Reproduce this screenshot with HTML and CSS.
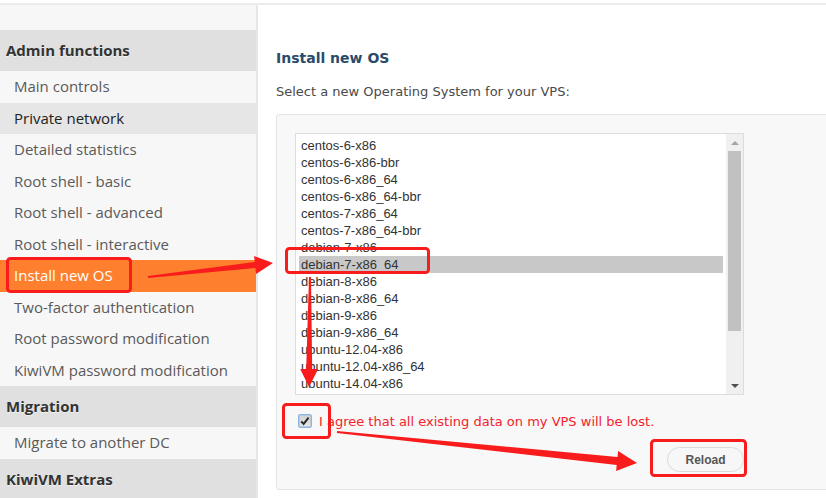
FILE: index.html
```html
<!DOCTYPE html>
<html lang="en">
<head>
<meta charset="utf-8">
<title>Install new OS</title>
<link rel="stylesheet" href="styles.css">
</head>
<body>
<div class="topline"></div>
<div class="layout">
  <aside class="sidebar">
    <div class="sb-head">Admin functions</div>
    <a class="sb-item">Main controls</a>
    <a class="sb-item sb-hover">Private network</a>
    <a class="sb-item">Detailed statistics</a>
    <a class="sb-item">Root shell - basic</a>
    <a class="sb-item">Root shell - advanced</a>
    <a class="sb-item">Root shell - interactive</a>
    <a class="sb-item sb-active">Install new OS</a>
    <a class="sb-item">Two-factor authentication</a>
    <a class="sb-item">Root password modification</a>
    <a class="sb-item">KiwiVM password modification</a>
    <div class="sb-head">Migration</div>
    <a class="sb-item">Migrate to another DC</a>
    <div class="sb-head">KiwiVM Extras</div>
  </aside>
  <main class="main">
    <h2 class="title">Install new OS</h2>
    <p class="desc">Select a new Operating System for your VPS:</p>
    <div class="panel">
      <div class="panel-body">
        <div class="listbox">
          <div class="options">
            <div class="opt">centos-6-x86</div>
            <div class="opt">centos-6-x86-bbr</div>
            <div class="opt">centos-6-x86_64</div>
            <div class="opt">centos-6-x86_64-bbr</div>
            <div class="opt">centos-7-x86_64</div>
            <div class="opt">centos-7-x86_64-bbr</div>
            <div class="opt">debian-7-x86</div>
            <div class="opt opt-sel">debian-7-x86_64</div>
            <div class="opt">debian-8-x86</div>
            <div class="opt">debian-8-x86_64</div>
            <div class="opt">debian-9-x86</div>
            <div class="opt">debian-9-x86_64</div>
            <div class="opt">ubuntu-12.04-x86</div>
            <div class="opt">ubuntu-12.04-x86_64</div>
            <div class="opt">ubuntu-14.04-x86</div>
            <div class="opt">ubuntu-14.04-x86_64</div>
          </div>
          <div class="scrollbar">
            <span class="sb-btn"><span class="tri-up"></span></span>
            <span class="thumb"></span>
            <span class="sb-space"></span>
            <span class="sb-btn"><span class="tri-down"></span></span>
          </div>
        </div>
        <label class="agree">
          <span class="check"><svg viewBox="0 0 12 12" width="12" height="12"><path d="M2.2 6.4 L4.6 8.9 L9.6 2.6" fill="none" stroke="#2b2b2b" stroke-width="2"/></svg></span>
          <span class="agree-text">I agree that all existing data on my VPS will be lost.</span>
        </label>
        <div class="actions">
          <button class="btn" type="button">Reload</button>
        </div>
      </div>
    </div>
  </main>
</div>
<svg class="annot" width="826" height="498" viewBox="0 0 826 498">
  <g fill="none" stroke="#f81c1c" stroke-width="3">
    <rect x="7.5" y="258.5" width="123" height="33" rx="3"/>
    <rect x="286.5" y="248.5" width="142" height="24" rx="3"/>
    <rect x="283.5" y="404.5" width="46" height="33" rx="3"/>
    <rect x="651.5" y="440.5" width="94" height="35" rx="3"/>
  </g>
  <g fill="#f81c1c">
    <polygon points="148.1,278 255.4,268 256.1,273.9 273,263 254.1,256.1 254.8,262 147.9,276"/>
    <polygon points="311,277 312.2,369 318.2,369 309,387 300.2,369 306.2,369 309,277"/>
    <polygon points="336.9,433 616.7,464.9 616.1,470.9 637,463 618.1,451 617.5,457 337.1,431"/>
  </g>
</svg>
</body>
</html>
```
FILE: styles.css
```css
html, body {
  margin: 0;
  padding: 0;
}
body {
  width: 826px;
  height: 498px;
  overflow: hidden;
  background: #fff;
  position: relative;
}
.topline {
  height: 3px;
  background: #fff;
  border-bottom: 2px solid #ececec;
}
.layout {
  display: flex;
  height: 493px;
}
.sidebar {
  width: 256px;
  flex: none;
  background: #f7f7f7;
  border-right: 2px solid #e6e6e6;
  padding-top: 25px;
  font-family: "Open Sans", "Noto Sans", sans-serif;
}
.sb-head {
  height: 41px;
  line-height: 41px;
  padding-left: 6px;
  background: #e0e0e0;
  font-weight: 700;
  font-size: 15px;
  color: #333;
  text-shadow: 0 1px 0 rgba(255, 255, 255, 0.6);
}
.sb-item {
  display: block;
  height: 31.5px;
  line-height: 31.5px;
  padding-left: 14px;
  font-size: 15px;
  color: #5a5a5a;
  white-space: nowrap;
}
.sb-hover {
  background: #e6e6e6;
  color: #222;
}
.sb-active {
  background: #fe7f2e;
  color: #fff;
}
.main {
  flex: 1;
  min-width: 0;
  padding: 44px 0 0 18px;
  font-family: "DejaVu Sans", Verdana, sans-serif;
}
.title {
  margin: 0;
  font-size: 14px;
  line-height: 18px;
  font-weight: 700;
  color: #294a69;
}
.desc {
  margin: 17px 0 0;
  font-size: 13px;
  line-height: 16px;
  color: #4a4a4a;
}
.panel {
  margin-top: 14px;
  width: 640px;
  border: 1px solid #e3e3e3;
  border-radius: 3px;
  background: #f8f8f8;
  padding: 18px 0 17px 18px;
}
.panel-body {
  width: 449px;
}
.listbox {
  display: flex;
  height: 262px;
  box-sizing: border-box;
  border: 1px solid #dcdcdc;
  background: #fff;
}
.options {
  flex: 1;
  min-width: 0;
  padding: 3px 3px 0 3px;
  overflow: hidden;
  font-family: "Liberation Sans", Arial, sans-serif;
  font-size: 13px;
  color: #333;
}
.opt {
  height: 17px;
  line-height: 17px;
  padding-left: 2px;
  white-space: nowrap;
}
.opt-sel {
  background: #c8c8c8;
}
.scrollbar {
  width: 17px;
  flex: none;
  background: #f0f0f0;
  display: flex;
  flex-direction: column;
}
.sb-btn {
  height: 17px;
  flex: none;
  display: flex;
  align-items: center;
  justify-content: center;
}
.tri-up {
  width: 0;
  height: 0;
  border-left: 4px solid transparent;
  border-right: 4px solid transparent;
  border-bottom: 4px solid #a3a3a3;
}
.tri-down {
  width: 0;
  height: 0;
  border-left: 4px solid transparent;
  border-right: 4px solid transparent;
  border-top: 4px solid #505050;
}
.thumb {
  height: 180px;
  flex: none;
  margin: 0 2px;
  background: #c1c1c1;
}
.sb-space {
  flex: 1;
}
.agree {
  display: flex;
  align-items: center;
  gap: 7px;
  margin-top: 19px;
  height: 14px;
  padding-left: 3px;
  color: #f3222b;
  font-size: 13px;
  white-space: nowrap;
}
.check {
  width: 14px;
  height: 14px;
  flex: none;
  box-sizing: border-box;
  border: 1px solid #8db6e4;
  border-radius: 2px;
  background: linear-gradient(#d2d2d2, #e8e8e8);
  box-shadow: inset 0 0 0 1px #b9c9dc;
  display: flex;
  align-items: center;
  justify-content: center;
}
.check svg {
  display: block;
}
.actions {
  display: flex;
  justify-content: flex-end;
  margin-top: 19px;
}
.btn {
  width: 77px;
  height: 25px;
  padding: 0;
  border: 1px solid #dadada;
  border-radius: 13px;
  background: #f7f7f7;
  font-family: "Liberation Sans", Arial, sans-serif;
  font-weight: 700;
  font-size: 12px;
  color: #555;
}
.annot {
  position: absolute;
  left: 0;
  top: 0;
  pointer-events: none;
}
```
